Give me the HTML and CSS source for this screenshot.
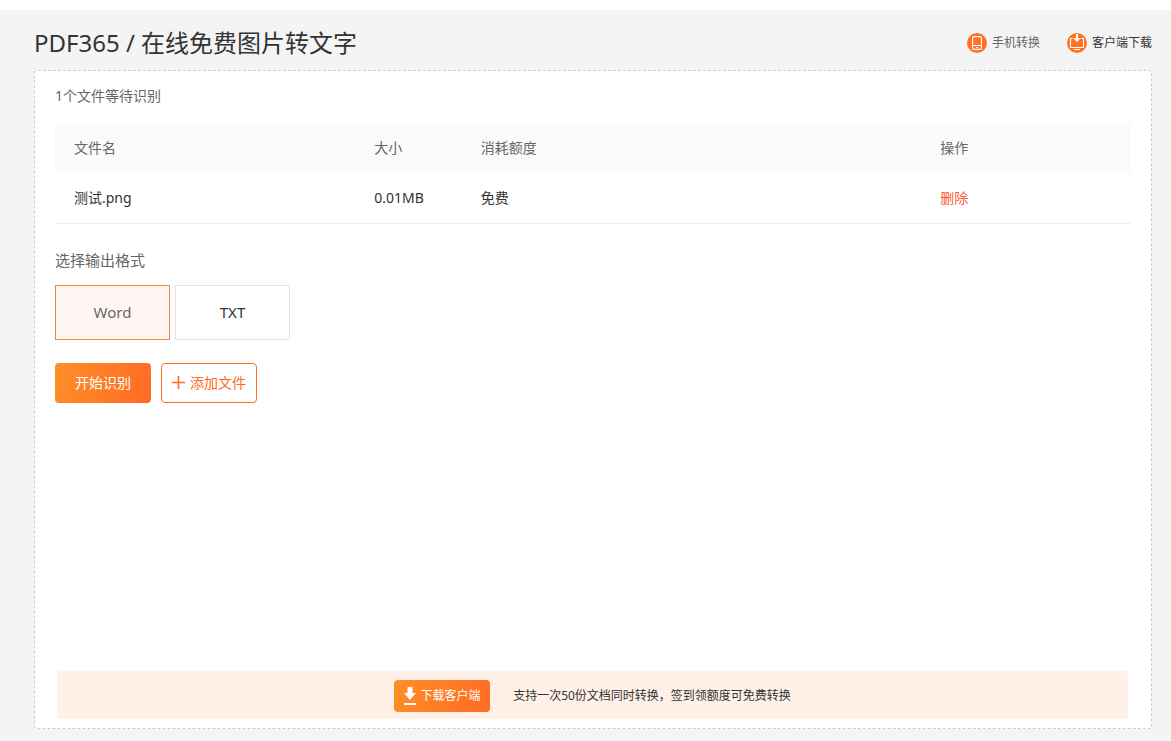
FILE: index.html
```html
<!DOCTYPE html>
<html lang="zh-CN">
<head>
<meta charset="utf-8">
<meta name="viewport" content="width=device-width, initial-scale=1">
<title>PDF365 / 在线免费图片转文字</title>
<link rel="stylesheet" href="styles.css">
</head>
<body>
<div class="page">
  <header class="header">
    <h1 class="title">PDF365 / 在线免费图片转文字</h1>
    <nav class="links">
      <a class="link" href="#">
        <svg class="link-icon" viewBox="0 0 20 20" aria-hidden="true">
          <circle cx="10" cy="10" r="10" fill="#ff7225"/>
          <rect x="5.6" y="3.6" width="8.8" height="12.8" rx="1.5" fill="none" stroke="#fff" stroke-width="1.1"/>
          <path d="M5.6 12.5h8.8" stroke="#fff"/>
          <path d="M9 14.5h2" stroke="#fff"/>
        </svg>
        <span>手机转换</span>
      </a>
      <a class="link link-dark" href="#">
        <svg class="link-icon" viewBox="0 0 20 20" aria-hidden="true">
          <circle cx="10" cy="10" r="10" fill="#ff7225"/>
          <path d="M5.500 5.500H3.500v9h13v-9h-2M7 16.500h6" fill="none" stroke="#fff" stroke-width="1.1"/>
          <path d="M9 1h2v4h3l-4 4-4-4h3z" fill="#fff"/>
        </svg>
        <span>客户端下载</span>
      </a>
    </nav>
  </header>
  <main class="panel">
    <p class="status">1个文件等待识别</p>
    <table class="files">
      <colgroup><col class="col-name"><col class="col-size"><col class="col-cost"><col class="col-action"></colgroup>
      <thead>
        <tr><th>文件名</th><th>大小</th><th>消耗额度</th><th>操作</th></tr>
      </thead>
      <tbody>
        <tr><td>测试.png</td><td>0.01MB</td><td>免费</td><td><a class="remove" href="#">删除</a></td></tr>
      </tbody>
    </table>
    <fieldset class="formats">
      <legend class="formats-title">选择输出格式</legend>
      <div class="options">
        <label class="option"><input class="option-input" type="radio" name="format" checked><span class="option-box">Word</span></label>
        <label class="option"><input class="option-input" type="radio" name="format"><span class="option-box">TXT</span></label>
      </div>
    </fieldset>
    <div class="actions">
      <button class="button primary" type="button">开始识别</button>
      <button class="button outline" type="button">
        <svg class="plus" viewBox="0 0 13 13" aria-hidden="true"><path d="M6.5 0v13M0 6.5h13" stroke="#ff6a22" stroke-width="1.6"/></svg>
        <span>添加文件</span>
      </button>
    </div>
    <aside class="banner">
      <button class="download" type="button">
        <svg class="download-icon" viewBox="0 0 12 18" aria-hidden="true"><path d="M3.5 0h5v6H12l-6 7-6-7h3.500zM0 16h12v2H0z" fill="#fff"/></svg>
        <span>下载客户端</span>
      </button>
      <p class="banner-text">支持一次50份文档同时转换，签到领额度可免费转换</p>
    </aside>
  </main>
</div>
</body>
</html>
```
FILE: styles.css
```css
* {
  box-sizing: border-box;
}

body {
  margin: 0;
  background: #f4f4f4;
  color: #333;
  font-family: "Noto Sans", "Noto Sans CJK SC", sans-serif;
  font-size: 14px;
  line-height: 20px;
}

button {
  font: inherit;
  cursor: pointer;
}

a {
  text-decoration: none;
}

.page {
  display: flex;
  flex-direction: column;
  min-height: 100vh;
  padding: 0 19px 12px 34px;
  border-top: 10px solid #fff;
}

.header {
  display: flex;
  align-items: center;
  justify-content: space-between;
  height: 60px;
  padding-top: 6px;
}

.title {
  margin: 0;
  font-size: 24px;
  font-weight: 400;
  line-height: 34px;
}

.links {
  display: flex;
  gap: 27px;
}

.link {
  display: flex;
  align-items: center;
  gap: 5px;
  color: #666;
  font-size: 12px;
}

.link-dark {
  color: #333;
}

.link-icon {
  width: 20px;
  height: 20px;
}

.panel {
  display: flex;
  flex: 1;
  flex-direction: column;
  padding: 15px 20px 9px;
  border: 1px dashed #ccc;
  border-radius: 4px;
  background: #fff;
}

.status {
  margin: 0 0 17px;
  color: #666;
}

.files {
  width: 100%;
  border-collapse: collapse;
  table-layout: fixed;
}

.col-name {
  width: 27.9%;
}

.col-size {
  width: 9.9%;
}

.col-cost {
  width: 42.7%;
}

.files th,
.files td {
  height: 50px;
  padding: 0 0 0 19px;
  text-align: left;
}

.files th {
  background: #fafafa;
  color: #666;
  font-weight: 400;
}

.files td {
  border-bottom: 1px solid #eee;
}

.remove {
  color: #ff5a36;
}

.formats {
  min-width: 0;
  margin: 26px 0 0;
  padding: 0;
  border: 0;
}

.formats-title {
  margin-bottom: 15px;
  padding: 0;
  color: #666;
  font-size: 15px;
}

.options {
  display: flex;
  gap: 5px;
}

.option {
  position: relative;
  width: 115px;
  height: 55px;
  font-size: 15px;
}

.option-input {
  position: absolute;
  inset: 0;
  width: 100%;
  height: 100%;
  margin: 0;
  opacity: 0;
  cursor: pointer;
}

.option-box {
  display: flex;
  align-items: center;
  justify-content: center;
  height: 100%;
  border: 1px solid #e4e4e4;
}

.option-input:checked + .option-box {
  border-color: #f98636;
  background: #fff6f3;
  color: #666;
}

.actions {
  display: flex;
  gap: 10px;
  margin-top: 23px;
}

.button {
  display: flex;
  align-items: center;
  justify-content: center;
  gap: 5px;
  width: 96px;
  height: 40px;
  padding: 0;
  border-radius: 4px;
}

.primary,
.download {
  border: 0;
  background: linear-gradient(110deg, #ff8f28, #ff6a24);
  color: #fff;
}

.outline {
  border: 1px solid #ff7225;
  background: #fff;
  color: #ff6a22;
}

.plus {
  width: 13px;
  height: 13px;
}

.banner {
  display: flex;
  align-items: center;
  justify-content: center;
  gap: 23px;
  min-height: 48px;
  margin: auto 3px 0 2px;
  padding: 9px 0 7px;
  border-radius: 4px;
  background: #fff1e8;
  font-size: 12px;
}

.download {
  display: flex;
  align-items: center;
  justify-content: center;
  gap: 5px;
  width: 96px;
  height: 32px;
  padding: 0;
  border-radius: 4px;
}

.download-icon {
  width: 12px;
  height: 18px;
}

.banner-text {
  margin: 0;
}
```
